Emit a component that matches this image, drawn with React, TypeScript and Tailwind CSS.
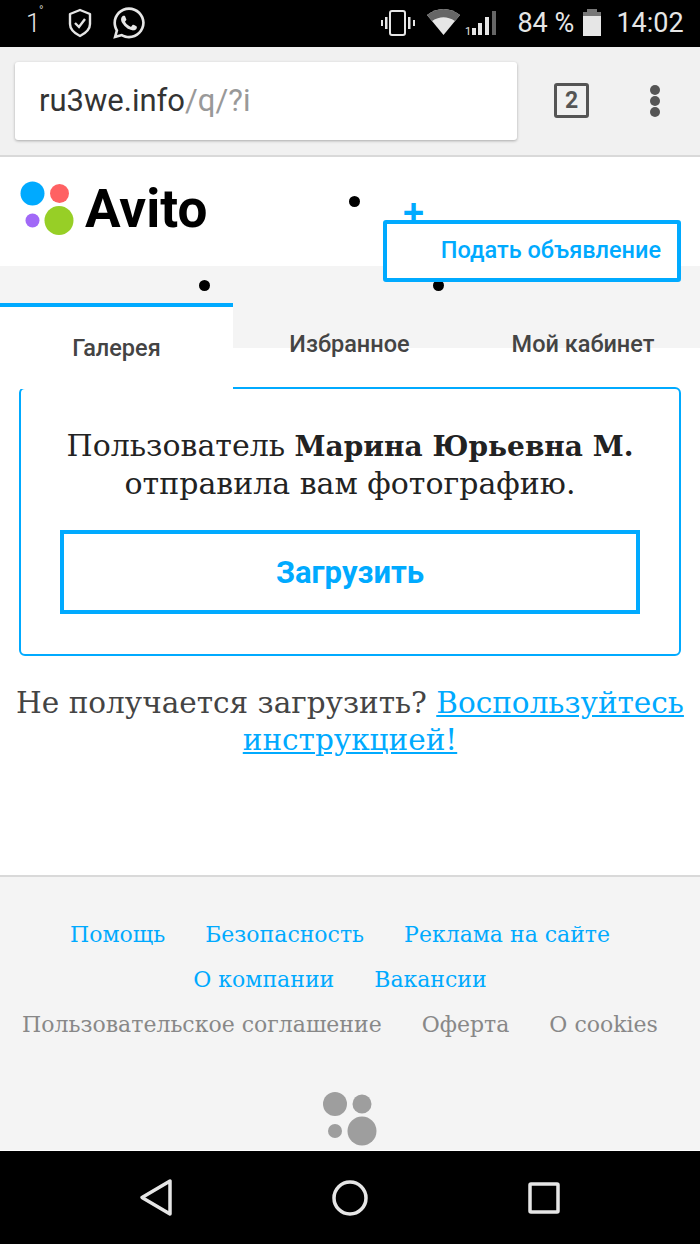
import { FaWhatsapp } from 'react-icons/fa'

const serif = "font-['DejaVu_Serif',serif]"
const roboto = "font-['Roboto',sans-serif]"

function StatusBar() {
  return (
    <div className={`flex h-[47px] items-center bg-black text-[#e6e6e6] ${roboto}`}>
      <div className="relative ml-[26px] text-[26px] font-light leading-none">
        1
        <span className="absolute left-[13px] top-[-5px] text-[12px]">°</span>
      </div>
      <svg className="ml-[28px]" width="24" height="30" viewBox="0 0 24 30" fill="none" stroke="#e6e6e6" strokeWidth="2.4">
        <path d="M12 2l10 4v10c0 5-4 9-10 12C6 25 2 21 2 16V6z" strokeLinejoin="round" />
        <path d="M7 15l4 4 6-8" />
      </svg>
      <FaWhatsapp className="ml-[19px]" size={36} />
      <svg className="ml-[233px]" width="36" height="28" viewBox="0 0 36 28" fill="#e6e6e6">
        <rect x="10" y="2" width="15" height="24" rx="2" fill="none" stroke="#e6e6e6" strokeWidth="2" />
        <rect x="5" y="8" width="2.500" height="12" />
        <rect x="1" y="11" width="2" height="6" />
        <rect x="28" y="8" width="2.500" height="12" />
        <rect x="33" y="11" width="2" height="6" />
      </svg>
      <svg className="ml-[11px]" width="72" height="30" viewBox="0 0 72 30">
        <path d="M0 7C10-1 23-1 33 7L16.500 27z" fill="#e6e6e6" />
        <path d="M0 7C10-1 23-1 33 7l-5 6C20 8 13 8 5 13z" fill="#666" />
        <text x="38" y="27" fontSize="11" fill="#e6e6e6">1</text>
        <rect x="45" y="20" width="4" height="7" fill="#e6e6e6" />
        <rect x="51" y="15" width="4" height="12" fill="#e6e6e6" />
        <rect x="58" y="9" width="4" height="18" fill="#e6e6e6" />
        <rect x="65" y="3" width="4" height="24" fill="#666" />
      </svg>
      <span className="ml-[18px] w-[65px] whitespace-nowrap text-[27px] leading-none">84 %</span>
      <svg className="ml-0" width="20" height="28" viewBox="0 0 20 28" fill="#e6e6e6">
        <rect x="5" y="0" width="10" height="4" fill="#777" />
        <rect x="1" y="3" width="18" height="4" fill="#777" />
        <rect x="1" y="7" width="18" height="20" />
      </svg>
      <span className="ml-[14px] text-[27px] leading-none">14:02</span>
    </div>
  )
}

function BrowserBar() {
  return (
    <div className={`flex h-[110px] items-start border-b-2 border-[#d9d9d9] bg-[#f1f1f1] ${roboto}`}>
      <div className="ml-[15px] mt-[15px] flex h-[78px] w-[502px] items-center rounded-[3px] bg-white pl-[24px] text-[31px] text-[#333] shadow-[0_1px_3px_rgba(0,0,0,0.3)]">
        ru3we.info<span className="text-[#999]">/q/?i</span>
      </div>
      <div className="ml-[37px] mt-[36px] flex h-[35px] w-[35px] items-center justify-center rounded-[3px] border-[3px] border-[#555] text-[23px] font-bold leading-none text-[#555]">
        2
      </div>
      <div className="ml-[61px] mt-[38px] flex flex-col gap-[1px]">
        <span className="h-[10px] w-[10px] rounded-full bg-[#555]" />
        <span className="h-[10px] w-[10px] rounded-full bg-[#555]" />
        <span className="h-[10px] w-[10px] rounded-full bg-[#555]" />
      </div>
    </div>
  )
}

function Header() {
  return (
    <div className="relative">
      <div className="flex h-[109px] items-start bg-white pl-[20px] pt-[24px]">
        <svg width="56" height="54" viewBox="0 0 56 54">
          <circle cx="12.500" cy="12.500" r="12" fill="#00aaff" />
          <circle cx="39.500" cy="12.500" r="9.500" fill="#ff6163" />
          <circle cx="12.500" cy="39.500" r="7" fill="#a169f7" />
          <circle cx="39" cy="39.500" r="14.500" fill="#97cf26" />
        </svg>
        <span className={`ml-[9px] mt-[-2px] text-[53px] font-bold leading-[60px] text-black ${roboto}`}>Avito</span>
      </div>
      <span className="absolute left-[349px] top-[39px] h-[11px] w-[11px] rounded-full bg-black" />
      <span className="absolute left-[199px] top-[123px] z-20 h-[11px] w-[11px] rounded-full bg-black" />
      <span className="absolute left-[433px] top-[123px] z-20 h-[11px] w-[11px] rounded-full bg-black" />
      <span className={`absolute left-[403px] top-[34px] text-[38px] font-medium leading-[44px] text-[#00aaff] ${roboto}`}>+</span>
      <div className={`absolute left-[383px] top-[63px] z-30 flex h-[62px] w-[298px] items-center justify-end rounded-[3px] border-[4px] border-[#00aaff] bg-white pr-[16px] text-[23.500px] font-medium text-[#00aaff] ${roboto}`}>
        Подать объявление
      </div>
    </div>
  )
}

function Tabs() {
  return (
    <div className={`relative z-10 h-[121px] text-[23.500px] font-medium text-[#444] ${roboto}`}>
      <div className="flex h-[82px] bg-[#f4f4f4]">
        <div className="mt-[37px] h-[86px] w-[233px] border-t-[4px] border-[#00aaff] bg-white pt-[24px] text-center">Галерея</div>
        <div className="w-[233px] pt-[61px] text-center">Избранное</div>
        <div className="w-[234px] pt-[61px] text-center">Мой кабинет</div>
      </div>
    </div>
  )
}

function MessageCard() {
  return (
    <div className="mx-[19px] h-[269px] rounded-[6px] border-2 border-[#00aaff] bg-white px-[39px] pt-[38px]">
      <p className={`whitespace-nowrap text-center text-[30px] leading-[37px] text-[#222] ${serif}`}>
        Пользователь <b className="text-[28px]">Марина Юрьевна М.</b>
        <br />
        отправила вам фотографию.
      </p>
      <div className={`mt-[28px] flex h-[84px] items-center justify-center border-[4px] border-[#00aaff] pt-[3px] text-[31px] font-bold text-[#00aaff] ${roboto}`}>
        Загрузить
      </div>
    </div>
  )
}

function Footer() {
  return (
    <div className={`flex h-[275px] flex-col items-center border-t-2 border-[#d9d9d9] bg-[#f4f4f4] pt-[35px] text-[22px] leading-[45px] text-[#00aaff] ${serif}`}>
      <div className="mr-[20px] flex h-[45px] gap-[40px]">
        <span>Помощь</span>
        <span>Безопасность</span>
        <span>Реклама на сайте</span>
      </div>
      <div className="mr-[20px] flex h-[45px] gap-[40px]">
        <span>О компании</span>
        <span>Вакансии</span>
      </div>
      <div className="mr-[20px] flex h-[45px] gap-[40px] text-[#888]">
        <span>Пользовательское соглашение</span>
        <span>Оферта</span>
        <span>О cookies</span>
      </div>
      <svg className="mt-[45px]" width="54" height="54" viewBox="0 0 54 54" fill="#9e9e9e">
        <circle cx="12" cy="12" r="12" />
        <circle cx="39" cy="12" r="9.500" />
        <circle cx="12" cy="39" r="7" />
        <circle cx="39" cy="39" r="14.500" />
      </svg>
    </div>
  )
}

function NavBar() {
  return (
    <div className="flex h-[94px] items-center border-t border-white bg-black">
      <svg className="ml-[139px]" width="34" height="40" viewBox="0 0 34 40" fill="none" stroke="#e6e6e6" strokeWidth="3.500" strokeLinejoin="round">
        <path d="M31 3v33L3 19.500z" />
      </svg>
      <svg className="ml-[159px]" width="36" height="36" viewBox="0 0 36 36" fill="none" stroke="#e6e6e6" strokeWidth="3.500">
        <circle cx="18" cy="18" r="16" />
      </svg>
      <svg className="ml-[160px]" width="32" height="32" viewBox="0 0 32 32" fill="none" stroke="#e6e6e6" strokeWidth="3.500" strokeLinejoin="round">
        <rect x="2" y="2" width="28" height="28" rx="1" />
      </svg>
    </div>
  )
}

export default function App() {
  return (
    <div className="flex h-[1244px] w-[700px] flex-col overflow-hidden bg-white">
      <StatusBar />
      <BrowserBar />
      <Header />
      <Tabs />
      <MessageCard />
      <div className={`h-[220px] pt-[29px] text-center text-[29.500px] leading-[37px] text-[#444] ${serif}`}>
        Не получается загрузить? <a className="text-[#00aaff] underline">Воспользуйтесь инструкцией!</a>
      </div>
      <Footer />
      <NavBar />
    </div>
  )
}
